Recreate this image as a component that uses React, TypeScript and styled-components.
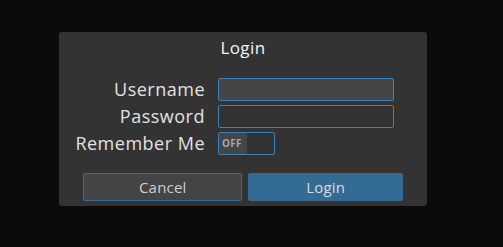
import React from "react";
import styled, { createGlobalStyle } from "styled-components";

const GlobalStyle = createGlobalStyle`
	html, body {
		margin: 0;
		padding: 0;
		background: #0b0b0b;
		font-family: "Open Sans", "Noto Sans", sans-serif;
	}
`;

const Page = styled.div`
	width: 503px;
	height: 247px;
	padding: 32px 0 0 59px;
	box-sizing: border-box;
`;

const Dialog = styled.div`
	width: 368px;
	height: 174px;
	box-sizing: border-box;
	background: #333333;
	border-radius: 3px;
	display: flex;
	flex-direction: column;
	padding: 4px 24px 0 10px;
`;

const Title = styled.div`
	text-align: center;
	color: #f4f4f4;
	font-size: 17px;
	letter-spacing: 0.4px;
	line-height: 24px;
	height: 42px;
	padding-left: 14px;
`;

const Form = styled.div`
	display: grid;
	grid-template-columns: 136px 176px;
	column-gap: 13px;
	row-gap: 4px;
	align-items: center;
`;

const Label = styled.label`
	text-align: right;
	color: #e2e2e2;
	font-size: 18px;
	letter-spacing: 0.5px;
	line-height: 23px;
	white-space: nowrap;
`;

interface InputProps {
	$focused?: boolean;
}
const Input = styled.input<InputProps>`
	height: 23px;
	width: 176px;
	box-sizing: border-box;
	border: 1px solid #3483c0;
	border-radius: 2px;
	background: ${(p) => (p.$focused ? "#454545" : "#333333")};
	color: #eee;
	outline: none;
	padding: 0 4px;
`;

const Toggle = styled.div`
	width: 57px;
	height: 23px;
	box-sizing: border-box;
	border: 1px solid #3483c0;
	border-radius: 2px;
	display: flex;
	overflow: hidden;
`;

const ToggleOff = styled.span`
	width: 28px;
	background: #454545;
	color: #a8a8a8;
	font-size: 10px;
	font-weight: 700;
	line-height: 21px;
	padding-left: 3px;
	box-sizing: border-box;
	letter-spacing: 0.3px;
`;

const Buttons = styled.div`
	display: flex;
	gap: 6px;
	margin-top: 18px;
	padding-left: 14px;
`;

interface ButtonProps {
	$primary?: boolean;
}
const Button = styled.button<ButtonProps>`
	height: 28px;
	width: ${(p) => (p.$primary ? "155px" : "160px")};
	box-sizing: border-box;
	border-radius: 2px;
	border: 1px solid ${(p) => (p.$primary ? "#336b95" : "#2e6f9f")};
	background: ${(p) => (p.$primary ? "#336b95" : "#444444")};
	color: ${(p) => (p.$primary ? "#d8dde2" : "#cfcfcf")};
	font-family: "Open Sans", "Noto Sans", sans-serif;
	font-size: 15px;
	letter-spacing: 0.2px;
	padding: 0;
`;

export default function App() {
	return (
		<>
			<GlobalStyle />
			<Page>
				<Dialog>
					<Title>Login</Title>
					<Form>
						<Label>Username</Label>
						<Input $focused />
						<Label>Password</Label>
						<Input type="password" />
						<Label>Remember Me</Label>
						<Toggle>
							<ToggleOff>OFF</ToggleOff>
						</Toggle>
					</Form>
					<Buttons>
						<Button>Cancel</Button>
						<Button $primary>Login</Button>
					</Buttons>
				</Dialog>
			</Page>
		</>
	);
}
